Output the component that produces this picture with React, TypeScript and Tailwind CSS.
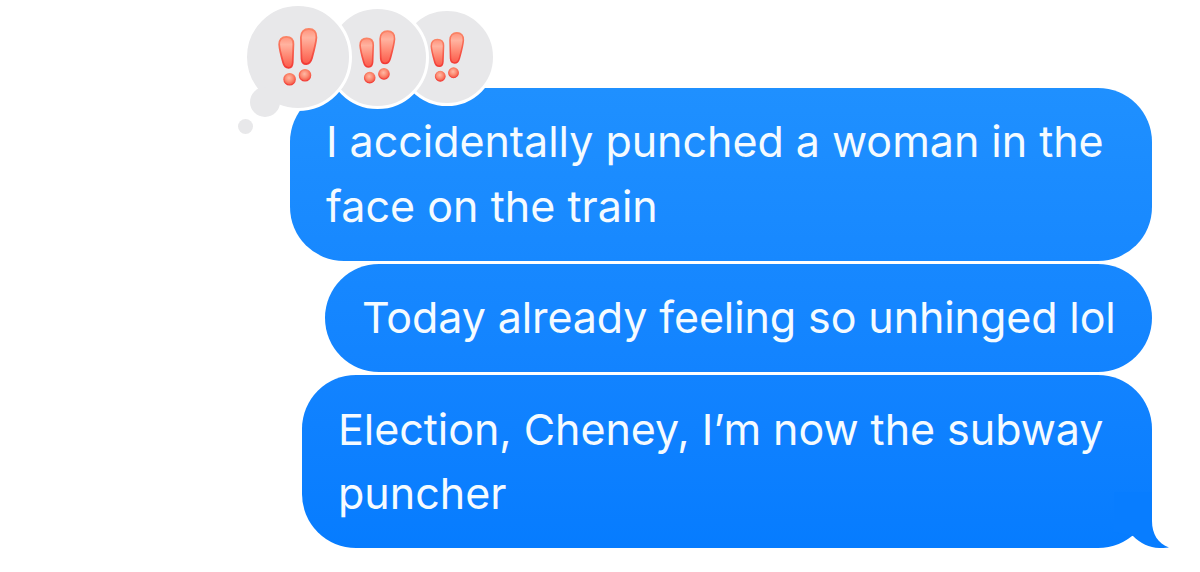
import React from "react";

interface ILine {
  text: string;
  className: string;
}

interface IMessage {
  className: string;
  lines: ILine[];
  reactions?: boolean;
  tail?: boolean;
}

const MESSAGES: IMessage[] = [
  {
    className: "w-[862px] h-[173px] pl-[36px] pt-[21px] from-[#1f90ff] to-[#1788ff]",
    reactions: true,
    lines: [
      { text: "I accidentally punched a woman in the", className: "tracking-[-0.03px]" },
      { text: "face on the train", className: "tracking-[0.03px]" },
    ],
  },
  {
    className: "w-[827px] h-[108px] pl-[37px] pt-[21px] from-[#1788ff] to-[#1283ff]",
    lines: [
      { text: "Today already feeling so unhinged lol", className: "tracking-[-0.1px]" },
    ],
  },
  {
    className: "w-[850px] h-[173px] pl-[36px] pt-[22px] from-[#1283ff] to-[#067cff]",
    tail: true,
    lines: [
      { text: "Election, Cheney, I’m now the subway", className: "tracking-[-0.04px]" },
      { text: "puncher", className: "relative -top-px" },
    ],
  },
];

function Emphasis({ id, className }: { id: string; className: string }) {
  const body = `url(#body-${id})`;
  const dot = `url(#dot-${id})`;
  const edge = `url(#edge-${id})`;

  return (
    <svg viewBox="0 0 40 58" className={className}>
      <defs>
        <linearGradient id={`body-${id}`} x1="0" y1="0" x2="0" y2="1">
          <stop offset="0" stopColor="#ff937c" />
          <stop offset="0.25" stopColor="#ffb3a0" />
          <stop offset="0.6" stopColor="#ff8a75" />
          <stop offset="1" stopColor="#fb5a4b" />
        </linearGradient>
        <linearGradient id={`edge-${id}`} x1="0" y1="0" x2="0" y2="1">
          <stop offset="0" stopColor="#fa8466" />
          <stop offset="0.5" stopColor="#f75f4e" />
          <stop offset="1" stopColor="#f23a35" />
        </linearGradient>
        <radialGradient id={`dot-${id}`} cx="0.45" cy="0.38" r="0.6">
          <stop offset="0" stopColor="#ffb9a5" />
          <stop offset="0.55" stopColor="#fc8c74" />
          <stop offset="1" stopColor="#f55a48" />
        </radialGradient>
      </defs>
      <g fill={body} stroke={edge} strokeWidth="1.8">
        <path d="M1.2 16.5C1 11.6 3.8 8.8 8.3 8.8C12.8 8.8 15.4 11.6 15.4 16L14.7 34.5C14.5 38 13 39.8 10.6 39.8C7.6 39.8 6 38 5.2 34.8C3.4 28.5 1.5 22 1.2 16.5Z" />
        <path d="M22.9 9.2C22.9 4 26 1 30.9 1C35.8 1 38.7 4 38.4 9.4C38 15.5 35.6 24 33.8 30.6C32.8 34.2 31.2 36 28.2 36C25.3 36 23.8 34.2 23.5 30.8Z" />
      </g>
      <g fill={dot} stroke={edge} strokeWidth="1.2">
        <circle cx="11.6" cy="51.3" r="5.7" />
        <circle cx="27" cy="47.3" r="5.7" />
      </g>
    </svg>
  );
}

function Reactions() {
  return (
    <div className="absolute left-[-46px] top-[-85px] flex items-center">
      <div className="relative z-20 flex size-[108px] shrink-0 items-center justify-center rounded-full border-[3px] border-white bg-[#e8e8ea]">
        <Emphasis id="first" className="h-[58px] w-[40px]" />
        <div className="absolute left-[3px] top-[81px] size-[30px] rounded-full bg-[#e8e8ea]" />
        <div className="absolute left-[-9px] top-[113px] size-[15px] rounded-full bg-[#e8e8ea]" />
      </div>
      <div className="relative z-10 -ml-[26px] flex size-[103px] shrink-0 items-center justify-center rounded-full border-[3px] border-white bg-[#e8e8ea]">
        <Emphasis id="second" className="h-[54px] w-[37px]" />
      </div>
      <div className="-ml-[31px] flex size-[98px] shrink-0 items-center justify-center rounded-full border-[3px] border-white bg-[#e8e8ea]">
        <Emphasis id="third" className="h-[50px] w-[35px]" />
      </div>
    </div>
  );
}

function Tail() {
  return (
    <svg
      viewBox="0 0 56 56"
      className="absolute -right-[18px] bottom-0 h-[56px] w-[56px]"
    >
      <path
        d="M0 0H38V29C38 42 44 51.5 55 55.5C40 57.5 29 54 19 44L0 40Z"
        fill="#087dff"
      />
    </svg>
  );
}

function Bubble({ message }: { message: IMessage }) {
  const { className, lines, reactions, tail } = message;

  return (
    <div
      className={
        "relative rounded-[54px] bg-linear-to-b text-[43px] leading-[65px] text-[#f5fbff] " +
        className
      }
    >
      {tail && <Tail />}
      {lines.map((line) => (
        <p key={line.text} className={"relative whitespace-nowrap " + line.className}>
          {line.text}
        </p>
      ))}
      {reactions && <Reactions />}
    </div>
  );
}

function App() {
  return (
    <div className="flex h-[572px] w-[1200px] flex-col items-end gap-[3px] overflow-hidden bg-white pr-[48px] pt-[88px] font-['Inter',sans-serif]">
      {MESSAGES.map((m, i) => (
        <Bubble key={"message#" + i} message={m} />
      ))}
    </div>
  );
}

export default App;
